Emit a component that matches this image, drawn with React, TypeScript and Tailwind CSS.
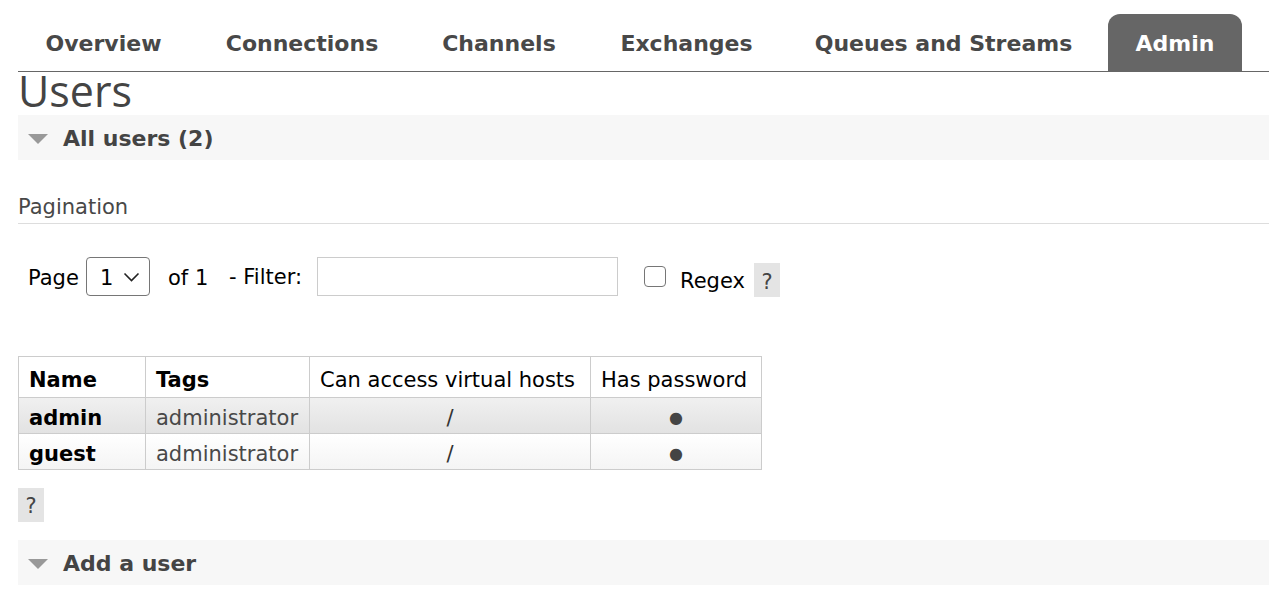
import React from 'react';

const tabs = [
  { label: 'Overview', w: 'w-[169px]' },
  { label: 'Connections', w: 'w-[204px]' },
  { label: 'Channels', w: 'w-[166px]' },
  { label: 'Exchanges', w: 'w-[185px]' },
  { label: 'Queues and Streams', w: 'w-[305px]' },
  { label: 'Admin', w: 'w-[134px]', active: true },
];

const users = [
  { name: 'admin', tags: 'administrator', vhosts: '/', row: 'bg-gradient-to-b from-[#f0f0f0] to-[#e2e2e2]' },
  { name: 'guest', tags: 'administrator', vhosts: '/', row: 'bg-gradient-to-b from-[#ffffff] to-[#f4f4f4]' },
];

function SectionBar({ title }: { title: string }) {
  return (
    <div className="flex h-[45px] items-center bg-[#f7f7f7] pl-[10px] pt-[2px]">
      <span className="h-0 w-0 border-x-[10px] border-t-[10px] border-x-transparent border-t-[#999]" />
      <h2 className="ml-[15px] text-[22px] font-bold text-[#444]">{title}</h2>
    </div>
  );
}

function HelpBox() {
  return (
    <span className="flex h-[34px] w-[26px] items-center justify-center bg-[#e4e4e4] pt-[3px] text-[21px] text-[#444]">
      ?
    </span>
  );
}

const cell = 'border border-[#ccc] pt-[5px] leading-[24px]';

export default function App() {
  return (
    <div className="min-h-[596px] bg-white pl-[18px] font-['DejaVu_Sans',sans-serif] text-[21px] text-black">
      <nav className="flex h-[72px] items-end border-b border-[#666] pl-[1px]">
        <ul className="flex gap-[12px]">
          {tabs.map((t) => (
            <li
              key={t.label}
              className={`flex h-[57px] items-center justify-center rounded-t-[12px] pt-[2px] text-[22px] font-bold ${t.w} ${
                t.active ? 'bg-[#666] text-white' : 'text-[#484848]'
              }`}
            >
              {t.label}
            </li>
          ))}
        </ul>
      </nav>

      <h1 className="h-[43px] font-['Open_Sans',sans-serif] text-[43px] font-normal leading-[37px] text-[#444]">
        Users
      </h1>

      <SectionBar title="All users (2)" />

      <div className="mt-[35px] border-b border-[#ddd] pb-[4px] leading-[24px] text-[#484848]">Pagination</div>

      <div className="mt-[33px] flex h-[39px] items-center pl-[10px] leading-[24px]">
        <span className="mt-[2px] w-[50px]">Page</span>
        <span className="ml-[8px] flex h-[39px] w-[64px] items-center justify-between rounded-[4px] border border-[#767676] pl-[13px] pr-[9px]">
          <span className="mt-[2px]">1</span>
          <svg width="17" height="10" viewBox="0 0 17 10" fill="none">
            <path d="M1.5 1.5 L8.5 8.5 L15.5 1.5" stroke="#222" strokeWidth="1.6" />
          </svg>
        </span>
        <span className="ml-[18px] mt-[2px] w-[41px]">of 1</span>
        <span className="ml-[20px] w-[79px] whitespace-nowrap">- Filter:</span>
        <span className="ml-[9px] h-[39px] w-[301px] border border-[#ccc]" />
        <span className="ml-[26px] h-[21px] w-[22px] rounded-[4px] border-[1.5px] border-[#767676]" />
        <span className="ml-[14px] mt-[8px] w-[66px]">Regex</span>
        <span className="ml-[8px] mt-[7px]">
          <HelpBox />
        </span>
      </div>

      <table className="mt-[60px] border-collapse border border-[#ccc]">
        <thead>
          <tr className="h-[41px]">
            <th className={`w-[127px] pl-[10px] text-left font-bold ${cell}`}>Name</th>
            <th className={`w-[164px] pl-[10px] text-left font-bold ${cell}`}>Tags</th>
            <th className={`w-[281px] px-[10px] text-left font-normal whitespace-nowrap ${cell}`}>
              Can access virtual hosts
            </th>
            <th className={`w-[171px] px-[10px] text-left font-normal whitespace-nowrap ${cell}`}>Has password</th>
          </tr>
        </thead>
        <tbody>
          {users.map((u) => (
            <tr key={u.name} className={`h-[36px] ${u.row}`}>
              <td className={`pl-[10px] font-bold ${cell}`}>{u.name}</td>
              <td className={`pl-[10px] text-[#484848] ${cell}`}>{u.tags}</td>
              <td className={`text-center text-[#333] ${cell}`}>{u.vhosts}</td>
              <td className={`text-center text-[16px] text-[#444] ${cell}`}>●</td>
            </tr>
          ))}
        </tbody>
      </table>

      <div className="mt-[18px] flex h-[33px]">
        <HelpBox />
      </div>

      <div className="mt-[19px]">
        <SectionBar title="Add a user" />
      </div>
    </div>
  );
}
